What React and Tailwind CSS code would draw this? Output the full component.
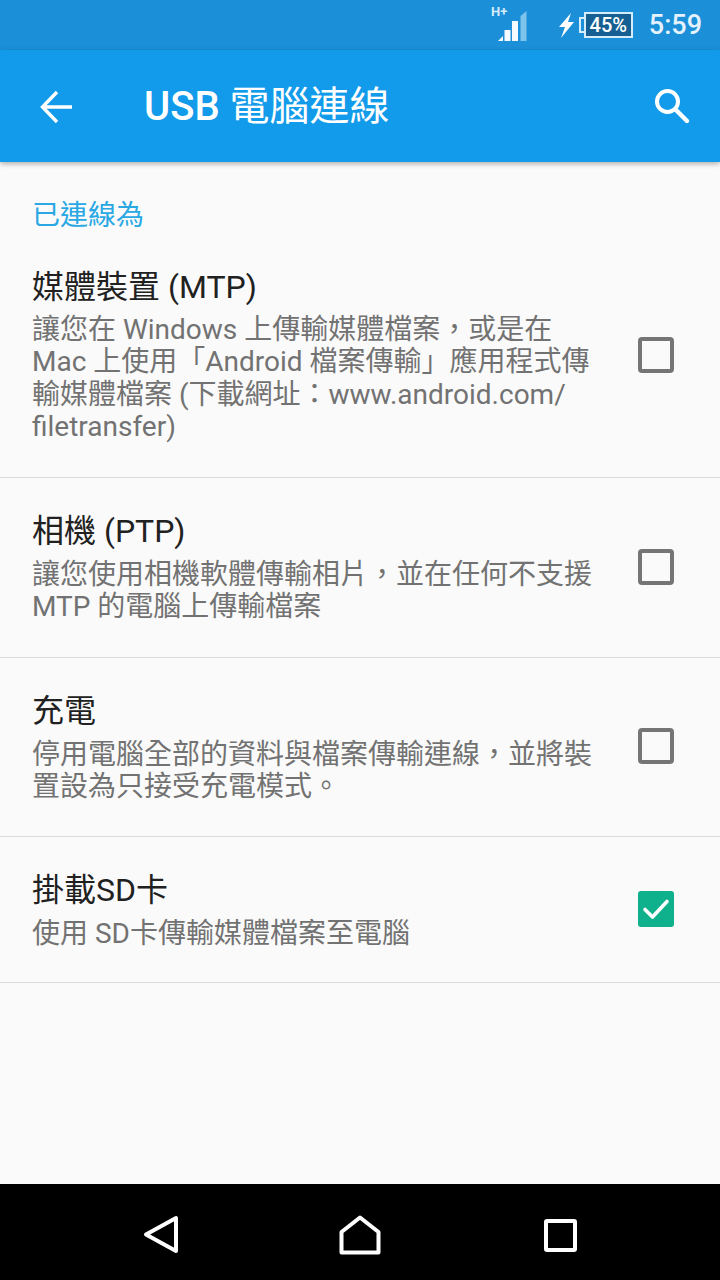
const FONT = "font-['Roboto','Noto_Sans_CJK_TC',sans-serif]";

const OPTIONS = [
  {
    title: "媒體裝置 (MTP)",
    lines: ["讓您在 Windows 上傳輸媒體檔案，或是在", "Mac 上使用「Android 檔案傳輸」應用程式傳", "輸媒體檔案 (下載網址：www.android.com/", "filetransfer)"],
    rowClass: "h-[246px] pt-[35px]",
    descClass: "mt-[7px]",
    boxClass: "mt-[70px]",
  },
  {
    title: "相機 (PTP)",
    lines: ["讓您使用相機軟體傳輸相片，並在任何不支援", "MTP 的電腦上傳輸檔案"],
    rowClass: "h-[180px] pt-[33px]",
    descClass: "mt-[8px]",
    boxClass: "mt-[38px]",
  },
  {
    title: "充電",
    lines: ["停用電腦全部的資料與檔案傳輸連線，並將裝", "置設為只接受充電模式。"],
    rowClass: "h-[179px] pt-[33px]",
    descClass: "mt-[8px]",
    boxClass: "mt-[37px]",
  },
  {
    title: "掛載SD卡",
    lines: ["使用 SD卡傳輸媒體檔案至電腦"],
    rowClass: "h-[146px] pt-[33px]",
    descClass: "mt-[8px]",
    boxClass: "mt-[21px]",
    checked: true,
  },
];

function Checkbox({ checked, className }) {
  if (checked) {
    return (
      <div className={`w-9 h-9 rounded-[3px] bg-[#0fb08c] flex items-center justify-center shrink-0 ${className}`}>
        <svg width="28" height="24" viewBox="0 0 28 24" fill="none">
          <path d="M3 12.5 L10.5 20 L25 4.5" stroke="#fff" strokeWidth="3.6" strokeLinecap="round" strokeLinejoin="round" />
        </svg>
      </div>
    );
  }
  return <div className={`w-9 h-9 rounded-[4px] border-[4px] border-[#757575] shrink-0 ${className}`} />;
}

function OptionRow({ option }) {
  return (
    <div className={`flex justify-between pl-[32px] pr-[46px] border-b border-[#dcdcdc] ${option.rowClass}`}>
      <div>
        <div className="text-[32px] leading-[40px] text-[#212121]">{option.title}</div>
        <div className={`text-[28px] leading-[32.4px] text-[#727272] whitespace-nowrap ${option.descClass}`}>
          {option.lines.map((line) => (
            <div key={line}>{line}</div>
          ))}
        </div>
      </div>
      <Checkbox checked={option.checked} className={option.boxClass} />
    </div>
  );
}

function StatusBar() {
  return (
    <div className="h-[50px] bg-[#1c8fd9] flex items-center justify-end shrink-0 text-white">
      <svg width="40" height="42" viewBox="0 0 40 42" className="mr-[31px]" fill="#f4fafe">
        <text x="4" y="12" fontSize="13" fontWeight="700" fontFamily="Roboto" fill="#d5ecfa">H+</text>
        <path d="M11 37 L16 32 V37 Z" />
        <rect x="17.5" y="26" width="6" height="11" />
        <rect x="25" y="17" width="6" height="20" />
        <path d="M33.5 37 V12 L39.5 7 V37 Z" fill="#7dc3ec" />
      </svg>
      <svg width="17" height="25" viewBox="0 0 17 25" className="mr-[4px]">
        <path d="M13 0 L1 14 H7 L3 25 L16 9 H10 Z" fill="#fff" />
      </svg>
      <div className="w-[54px] h-[26px] mr-[16px] flex">
        <div className="w-[5px] h-[16px] mt-[5px] border-l-2 border-t-2 border-b-2 border-[#d5ecfa]" />
        <div className="flex-1 bg-[#155f92] border-2 border-[#d5ecfa] text-[20px] leading-[22px] font-medium text-center text-white">45%</div>
      </div>
      <div className="text-[27px] leading-none font-medium text-[#e3f2fc] mr-[18px]">5:59</div>
    </div>
  );
}

function AppBar() {
  return (
    <div className="relative z-10 h-[112px] bg-[#129bea] flex items-center shrink-0 shadow-[0_2px_5px_rgba(0,0,0,0.3)]">
      <svg width="34" height="34" viewBox="0 0 34 34" className="ml-[40px] mt-[2px]" fill="none">
        <path d="M32 17 H3 M17 2 L2.5 17 L17 32" stroke="#fff" strokeWidth="3.4" />
      </svg>
      <div className="ml-[70px] text-[40px] leading-none text-white mt-[2px]">
        <span className="font-medium">USB</span> 電腦連線
      </div>
      <svg width="38" height="38" viewBox="0 0 38 38" className="ml-auto mr-[29px] mt-[-1px]" fill="none">
        <circle cx="14.5" cy="14.5" r="10.5" stroke="#fff" strokeWidth="4" />
        <path d="M22.5 22.5 L34 34" stroke="#fff" strokeWidth="4.4" strokeLinecap="round" />
      </svg>
    </div>
  );
}

function NavBar() {
  return (
    <div className="h-[96px] bg-black flex items-center shrink-0 pt-[6px]">
      <svg width="38" height="40" viewBox="0 0 38 40" className="ml-[142px]" fill="none">
        <path d="M34 3 V36 L4 19.5 Z" stroke="#fff" strokeWidth="4" strokeLinejoin="round" />
      </svg>
      <svg width="42" height="40" viewBox="0 0 42 40" className="ml-[159px]" fill="none">
        <path d="M2.5 37.5 V17 L21 2.5 L39.5 17 V37.5 Z" stroke="#fff" strokeWidth="4" strokeLinejoin="round" />
      </svg>
      <div className="ml-[163px] w-[33px] h-[33px] rounded-[3px] border-[4px] border-white" />
    </div>
  );
}

export default function App() {
  return (
    <div lang="zh-TW" className={`w-[720px] h-[1280px] flex flex-col overflow-hidden bg-[#fafafa] ${FONT}`}>
      <StatusBar />
      <AppBar />
      <div className="flex-1">
        <div className="pt-[37px] pl-[32px] text-[28px] leading-[34px] text-[#29a8e4] h-[70px]">已連線為</div>
        {OPTIONS.map((option) => (
          <OptionRow key={option.title} option={option} />
        ))}
      </div>
      <NavBar />
    </div>
  );
}
